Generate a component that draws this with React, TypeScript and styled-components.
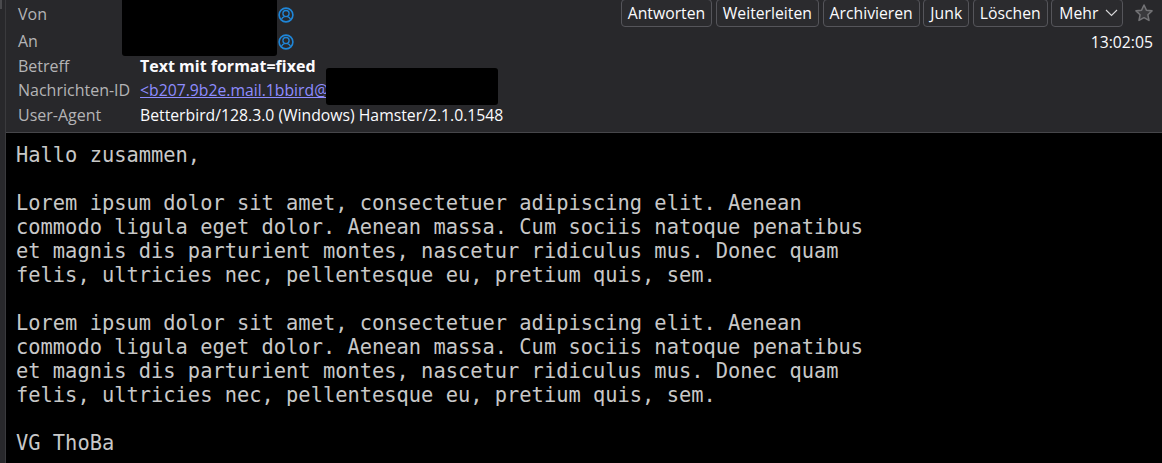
import React from "react"
import styled, { createGlobalStyle } from "styled-components"

const GlobalStyle = createGlobalStyle`
  html, body {
    margin: 0;
    padding: 0;
    background: #000;
  }
`

const Page = styled.div`
  width: 1162px;
  height: 463px;
  overflow: hidden;
  display: flex;
  background: #28282b;
`

const Gutter = styled.div`
  width: 5px;
  flex: none;
  background: #28282b;

  /* end of the pane splitter, just visible at the top */
  &::before {
    content: "";
    display: block;
    width: 2px;
    height: 9px;
    background: #4a4a4d;
  }
`

const Main = styled.div`
  flex: 1;
  min-width: 0;
  display: flex;
  flex-direction: column;
  border-left: 1px solid #3a3a3d;
`

const Header = styled.header`
  height: 132px;
  flex: none;
  position: relative;
  display: flex;
  justify-content: space-between;
  padding-left: 12px;
  padding-right: 8px;
  border-bottom: 1px solid #46464a;
  background: #28282b;
  font-family: "Open Sans", "Liberation Sans", sans-serif;
  font-size: 15.75px;
`

const Fields = styled.div`
  display: grid;
  grid-template-columns: 122px 1fr;
  grid-template-rows: 28px 26px 24px 24px 25px;
  align-items: center;
`

const Label = styled.div`
  color: #b4b4b6;
  font-size: 16px;
`

const Value = styled.div<{ $bold?: boolean }>`
  color: #fbfbfe;
  font-weight: ${(p) => (p.$bold ? 700 : 400)};
  font-size: ${(p) => (p.$bold ? "16px" : "inherit")};
  display: flex;
  align-items: center;
  white-space: nowrap;
`

const MessageLink = styled.a`
  color: #8e8cff;
  text-decoration: underline;
`

const ContactIcon = styled.svg`
  width: 16px;
  height: 16px;
  margin-left: 138px;
  margin-top: 2px;
  color: #1f86d8;
`

const Redaction = styled.div<{ $left: number; $top: number; $width: number; $height: number }>`
  position: absolute;
  left: ${(p) => p.$left}px;
  top: ${(p) => p.$top}px;
  width: ${(p) => p.$width}px;
  height: ${(p) => p.$height}px;
  background: #000;
  border-radius: 3px;
`

const Side = styled.div`
  display: flex;
  flex-direction: column;
  align-items: flex-end;
`

const Toolbar = styled.div`
  display: flex;
  align-items: center;
  gap: 3.6px;
`

const ActionButton = styled.button`
  height: 28px;
  margin-top: -1px;
  padding: 0 6px;
  display: flex;
  align-items: center;
  gap: 7px;
  background: #2b2b2e;
  color: #fbfbfe;
  border: 1px solid #55555a;
  border-radius: 4px;
  font: inherit;
`

const MoreButton = styled(ActionButton)`
  padding: 0 4px 0 7px;
`

const StarIcon = styled.svg`
  width: 20px;
  height: 20px;
  margin-left: 7px;
  margin-top: -2px;
  color: #737376;
`

const Time = styled.div`
  margin-top: 4px;
  margin-right: 1px;
  color: #fbfbfe;
`

const Body = styled.pre`
  flex: 1;
  margin: 0;
  padding: 10px 0 0 10px;
  background: #000;
  color: #c8c8c8;
  font-family: "DejaVu Sans Mono", monospace;
  font-size: 20.4px;
  line-height: 24px;
`

const Contact = () => (
  <ContactIcon viewBox="0 0 16 16" fill="none" stroke="currentColor">
    <circle cx="8" cy="8" r="6.9" strokeWidth="1.6" />
    <circle cx="8" cy="6.6" r="3.1" strokeWidth="1.3" />
    <path d="M3.4 12.6c.8-1.9 2.2-2.7 3.2-2.9M12.6 12.6c-.8-1.9-2.2-2.7-3.2-2.9" strokeWidth="1.3" />
  </ContactIcon>
)

const paragraph = `Lorem ipsum dolor sit amet, consectetuer adipiscing elit. Aenean
commodo ligula eget dolor. Aenean massa. Cum sociis natoque penatibus
et magnis dis parturient montes, nascetur ridiculus mus. Donec quam
felis, ultricies nec, pellentesque eu, pretium quis, sem.`

const actions = ["Antworten", "Weiterleiten", "Archivieren", "Junk", "Löschen"]

export default function App() {
  return (
    <Page>
      <GlobalStyle />
      <Gutter />
      <Main>
        <Header>
          <Fields>
            <Label>Von</Label>
            <Value><Contact /></Value>
            <Label>An</Label>
            <Value><Contact /></Value>
            <Label>Betreff</Label>
            <Value $bold>Text mit format=fixed</Value>
            <Label>Nachrichten-ID</Label>
            <Value><MessageLink>&lt;b207.9b2e.mail.1bbird@</MessageLink></Value>
            <Label>User-Agent</Label>
            <Value>Betterbird/128.3.0 (Windows) Hamster/2.1.0.1548</Value>
          </Fields>
          <Redaction $left={116} $top={-2} $width={155} $height={58} />
          <Redaction $left={320} $top={68} $width={172} $height={37} />
          <Side>
            <Toolbar>
              {actions.map((a) => (
                <ActionButton key={a}>{a}</ActionButton>
              ))}
              <MoreButton>
                Mehr
                <svg width="13" height="8" viewBox="0 0 13 8" fill="none" stroke="#d8d8da" strokeWidth="1.1">
                  <path d="M1 1l5.5 5.5L12 1" />
                </svg>
              </MoreButton>
              <StarIcon viewBox="0 0 18 18" fill="#3a3a3d" stroke="currentColor" strokeWidth="1.4">
                <path d="M9 1.8l2.2 4.7 5 .6-3.7 3.5 1 5.1L9 13.2l-4.5 2.5 1-5.1L1.8 7.1l5-.6z" strokeLinejoin="round" />
              </StarIcon>
            </Toolbar>
            <Time>13:02:05</Time>
          </Side>
        </Header>
        <Body>{`Hallo zusammen,

${paragraph}

${paragraph}

VG ThoBa`}</Body>
      </Main>
    </Page>
  )
}
